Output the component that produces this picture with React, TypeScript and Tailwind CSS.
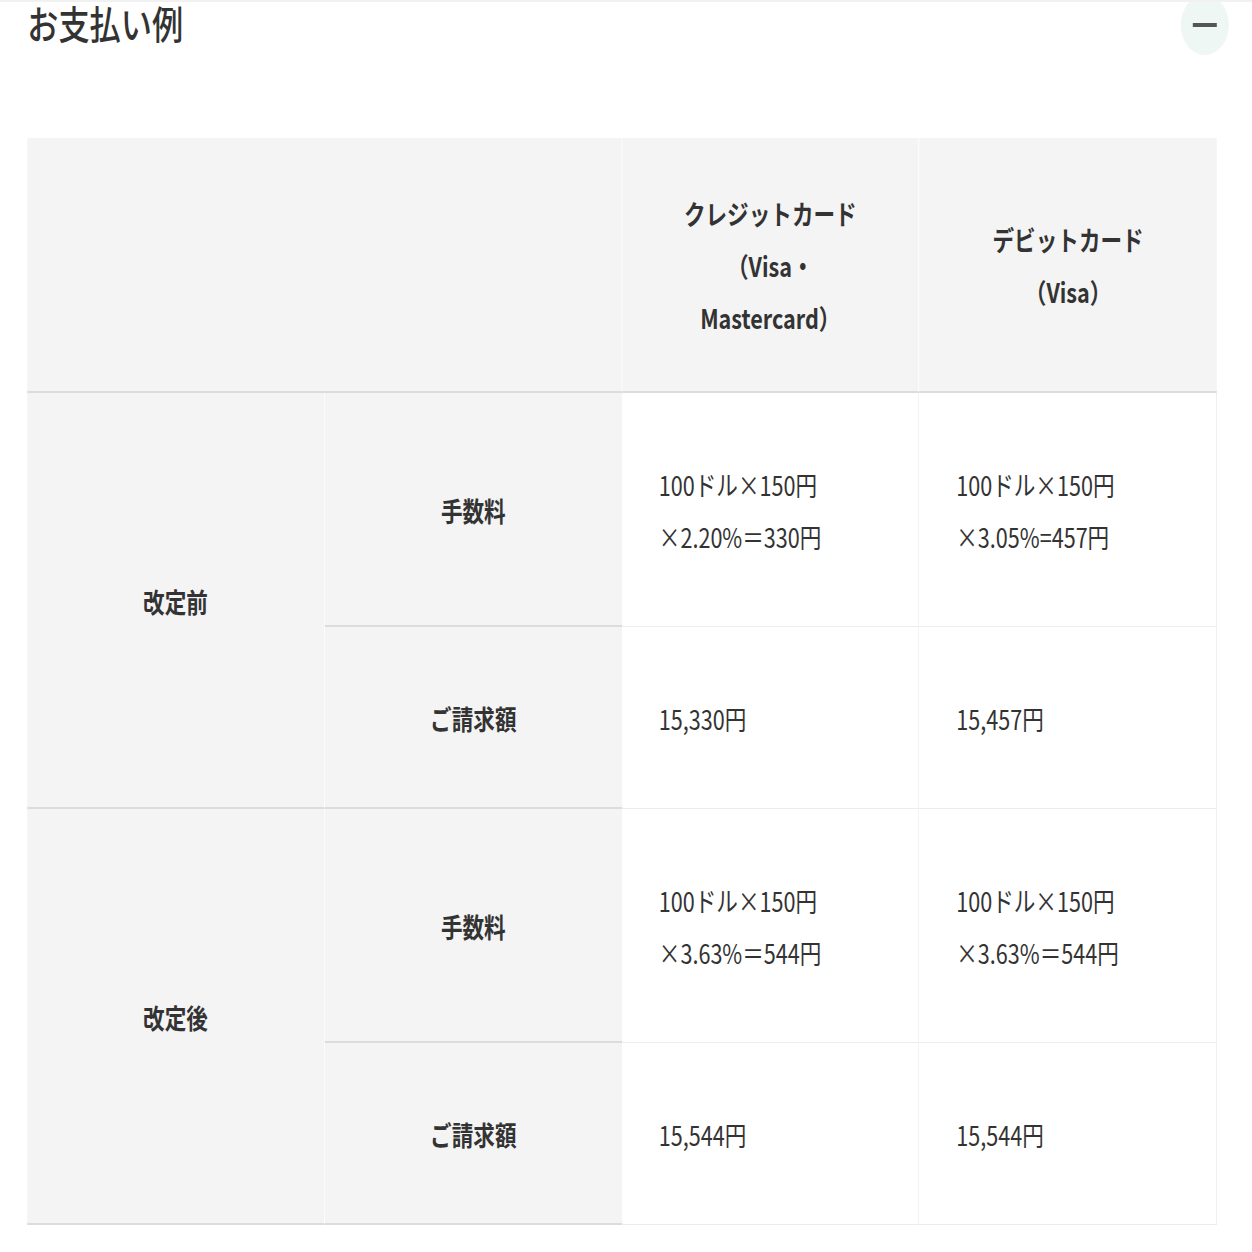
import React from 'react';

type Row = {
  label: string;
  fee: { credit: string[]; debit: string[] };
  total: { credit: string; debit: string };
};

const rows: Row[] = [
  {
    label: '改定前',
    fee: {
      credit: ['100ドル×150円', '×2.20%＝330円'],
      debit: ['100ドル×150円', '×3.05%=457円'],
    },
    total: { credit: '15,330円', debit: '15,457円' },
  },
  {
    label: '改定後',
    fee: {
      credit: ['100ドル×150円', '×3.63%＝544円'],
      debit: ['100ドル×150円', '×3.63%＝544円'],
    },
    total: { credit: '15,544円', debit: '15,544円' },
  },
];

const thBase = 'bg-[#f4f4f4] border-b-2 border-[#dcdcdc] font-bold text-center align-middle';
const tdBase = 'bg-white border-r border-b border-[#ececec] font-normal text-left align-middle pl-[46px] pr-4 pt-[3px]';

export default function App() {
  return (
    <div
      className="w-full overflow-hidden bg-white border-t-2 border-[#f1f1f1] text-[#333]"
      style={{ fontFamily: '"Noto Sans CJK JP", "Noto Sans", sans-serif' }}
    >
      {/* the whole section is drawn narrow, like the reference */}
      <div className="w-[1565px] origin-top-left scale-x-[0.8] pl-[34px] pr-[29px]">
        <div className="flex items-center justify-between -mt-[7px] h-[60px]">
          <h2 className="text-[39px] leading-[46px] font-medium mb-[10px] pt-[4px]">お支払い例</h2>
          <button className="w-[60px] h-[60px] rounded-full bg-[#eef7f3] flex items-center justify-center">
            <span className="block w-[30px] h-[4px] bg-[#555]" />
          </button>
        </div>

        <div className="mt-[83px] mr-[15px]">
          <table className="w-full table-fixed border-separate border-spacing-0 text-[27px] leading-[52px]">
            <colgroup>
              <col className="w-1/4" />
              <col className="w-1/4" />
              <col className="w-1/4" />
              <col className="w-1/4" />
            </colgroup>
            <thead>
              <tr className="h-[255px]">
                <th colSpan={2} className={`${thBase} border-r border-r-white`} />
                <th className={`${thBase} border-r border-r-white px-10 pt-[3px]`}>
                  クレジットカード
                  <br />
                  （Visa・
                  <br />
                  Mastercard）
                </th>
                <th className={`${thBase} px-10 pt-[3px]`}>
                  デビットカード
                  <br />
                  （Visa）
                </th>
              </tr>
            </thead>
            <tbody>
              {rows.map((r) => (
                <React.Fragment key={r.label}>
                  <tr className="h-[234px]">
                    <th rowSpan={2} className={`${thBase} border-r border-r-white pt-[3px]`}>
                      {r.label}
                    </th>
                    <th className={`${thBase} pt-[3px]`}>手数料</th>
                    <td className={tdBase}>
                      {r.fee.credit[0]}
                      <br />
                      {r.fee.credit[1]}
                    </td>
                    <td className={tdBase}>
                      {r.fee.debit[0]}
                      <br />
                      {r.fee.debit[1]}
                    </td>
                  </tr>
                  <tr className="h-[182px]">
                    <th className={`${thBase} pt-[3px]`}>ご請求額</th>
                    <td className={tdBase}>{r.total.credit}</td>
                    <td className={tdBase}>{r.total.debit}</td>
                  </tr>
                </React.Fragment>
              ))}
            </tbody>
          </table>
        </div>
        <div className="h-10" />
      </div>
    </div>
  );
}
